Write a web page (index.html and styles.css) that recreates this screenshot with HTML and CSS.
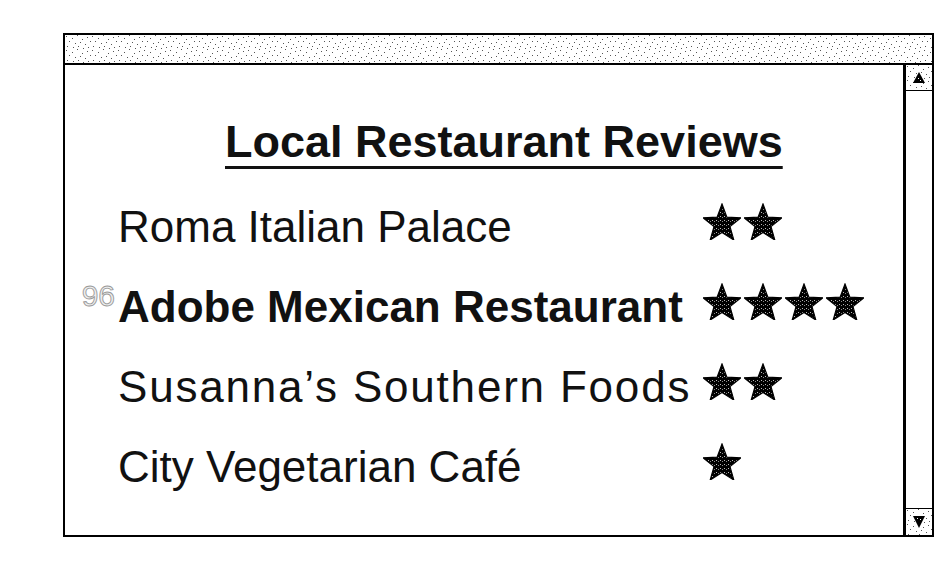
FILE: index.html
```html
<!DOCTYPE html>
<html>
<head>
<meta charset="utf-8">
<link rel="stylesheet" href="styles.css">
</head>
<body>
<svg class="defs" width="0" height="0" aria-hidden="true">
  <defs>
    <pattern id="speck" width="4" height="4" patternUnits="userSpaceOnUse">
      <rect width="4" height="4" fill="#000"/>
      <rect x="1" y="1" width="1" height="1" fill="#bbb"/>
      <rect x="3" y="2" width="1" height="1" fill="#888"/>
    </pattern>
    <pattern id="stipple" width="26" height="14" patternUnits="userSpaceOnUse">
      <rect width="26" height="14" fill="#fff"/>
      <g fill="#555">
        <rect x="1" y="1" width="1" height="1"/>
        <rect x="7" y="3" width="1" height="1"/>
        <rect x="12" y="0" width="1" height="1"/>
        <rect x="17" y="4" width="1" height="1"/>
        <rect x="22" y="2" width="1" height="1"/>
        <rect x="4" y="6" width="1" height="1"/>
        <rect x="10" y="8" width="1" height="1"/>
        <rect x="15" y="7" width="1" height="1"/>
        <rect x="20" y="9" width="1" height="1"/>
        <rect x="25" y="6" width="1" height="1"/>
        <rect x="2" y="11" width="1" height="1"/>
        <rect x="8" y="12" width="1" height="1"/>
        <rect x="13" y="11" width="1" height="1"/>
        <rect x="18" y="13" width="1" height="1"/>
        <rect x="23" y="12" width="1" height="1"/>
      </g>
    </pattern>
    <symbol id="star" viewBox="0 0 38 37">
      <polygon points="19,1 23.9,14.2 38,14.8 27,23.6 30.8,37 19,29.4 7.2,37 11,23.6 0,14.8 14.1,14.2" fill="url(#speck)" stroke="#000" stroke-width="1.2" stroke-linejoin="miter"/>
    </symbol>
  </defs>
</svg>
<div class="window">
  <div class="titlebar"><svg class="fill"><rect width="100%" height="100%" fill="url(#stipple)"/></svg></div>
  <div class="body">
    <div class="content">
      <h1 class="title">Local Restaurant Reviews</h1>
      <ul class="list">
        <li class="row">
          <span class="name">Roma Italian Palace</span>
          <span class="stars"><svg class="star"><use href="#star"/></svg><svg class="star"><use href="#star"/></svg></span>
        </li>
        <li class="row">
          <span class="name bold"><span class="mark">96</span>Adobe Mexican Restaurant</span>
          <span class="stars"><svg class="star"><use href="#star"/></svg><svg class="star"><use href="#star"/></svg><svg class="star"><use href="#star"/></svg><svg class="star"><use href="#star"/></svg></span>
        </li>
        <li class="row">
          <span class="name wide">Susanna’s Southern Foods</span>
          <span class="stars"><svg class="star"><use href="#star"/></svg><svg class="star"><use href="#star"/></svg></span>
        </li>
        <li class="row">
          <span class="name">City Vegetarian Café</span>
          <span class="stars"><svg class="star"><use href="#star"/></svg></span>
        </li>
      </ul>
    </div>
    <div class="scrollbar">
      <div class="arrow up"><svg class="fill"><rect width="100%" height="100%" fill="url(#stipple)"/></svg><svg class="tri" width="12" height="11" viewBox="0 0 12 11"><polygon points="6,0 12,11 0,11" fill="#000"/><rect x="5" y="6" width="1" height="1" fill="#fff"/><rect x="7" y="8" width="1" height="1" fill="#fff"/></svg></div>
      <div class="track"></div>
      <div class="arrow down"><svg class="fill"><rect width="100%" height="100%" fill="url(#stipple)"/></svg><svg class="tri" width="12" height="12" viewBox="0 0 12 12"><polygon points="0,0 12,0 6,12" fill="#000"/><rect x="4" y="2" width="1" height="1" fill="#fff"/><rect x="7" y="3" width="1" height="1" fill="#fff"/></svg></div>
    </div>
  </div>
</div>
</body>
</html>
```

FILE: styles.css
```css
html, body {
  margin: 0;
  padding: 0;
  background: #fff;
}

body {
  font-family: "Liberation Sans", Arial, sans-serif;
  color: #111;
}

.defs {
  position: absolute;
  width: 0;
  height: 0;
}

.window {
  margin: 33px 0 0 63px;
  width: 871px;
  height: 504px;
  box-sizing: border-box;
  border: 2px solid #000;
  display: flex;
  flex-direction: column;
}

.fill {
  position: absolute;
  inset: 0;
  width: 100%;
  height: 100%;
  display: block;
}

.titlebar {
  position: relative;
  height: 28px;
  border-bottom: 2px solid #000;
  flex: none;
}

.body {
  flex: 1;
  display: flex;
  min-height: 0;
}

.content {
  flex: 1;
}

.title {
  margin: 54px 0 23px 160px;
  font-size: 45px;
  line-height: 45px;
  font-weight: bold;
  text-decoration: underline;
  text-decoration-thickness: 3px;
  text-underline-offset: 9px;
  white-space: nowrap;
}

.list {
  list-style: none;
  margin: 0;
  padding: 0 0 0 53px;
}

.row {
  display: flex;
  align-items: flex-start;
  height: 80px;
  line-height: 80px;
  font-size: 44px;
  white-space: nowrap;
}

.name {
  flex: none;
  width: 585px;
  position: relative;
}

.bold {
  font-weight: bold;
}

.wide {
  letter-spacing: 1.8px;
}

.mark {
  position: absolute;
  right: calc(100% + 3px);
  top: 14px;
  font-size: 30px;
  line-height: 30px;
  font-weight: normal;
  letter-spacing: 0;
  color: #eee;
  -webkit-text-stroke: 0.9px #999;
}

.stars {
  display: flex;
  gap: 3px;
  margin-top: 16px;
}

.star {
  width: 38px;
  height: 37px;
  display: block;
}

.scrollbar {
  width: 26px;
  border-left: 3px solid #000;
  display: flex;
  flex-direction: column;
  flex: none;
}

.arrow {
  position: relative;
  display: flex;
  align-items: center;
  justify-content: center;
  flex: none;
}

.tri {
  position: relative;
  display: block;
}

.up {
  height: 25px;
  border-bottom: 1px solid #000;
}

.down {
  height: 26px;
  border-top: 1px solid #000;
}

.track {
  flex: 1;
}
```
